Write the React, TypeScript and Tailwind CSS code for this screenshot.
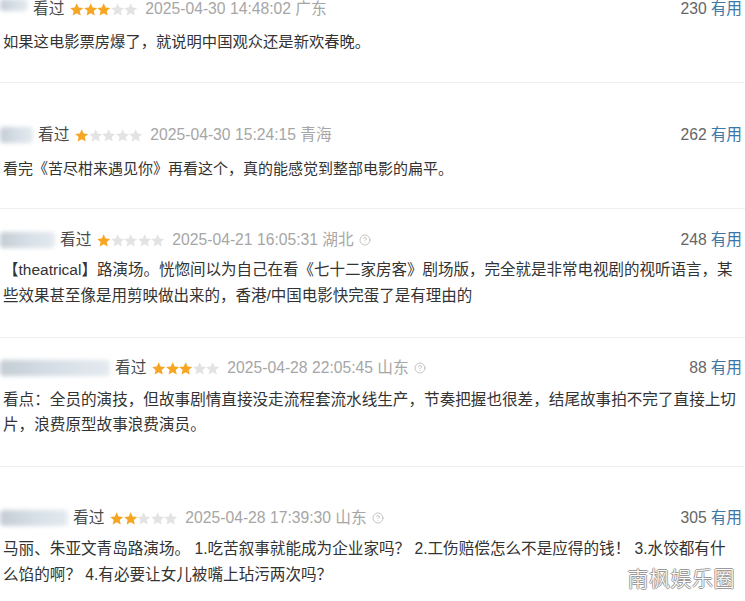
import { CircleHelp } from "lucide-react";

type Review = {
  blob: string;
  stars: number;
  time: string;
  place: string;
  help: boolean;
  votes: number;
  lines: string[];
  box: string;
  body: string;
};

const reviews: Review[] = [
  {
    blob: "w-[28px] h-[12px] -mt-[8px]",
    stars: 3,
    time: "2025-04-30 14:48:02",
    place: "广东",
    help: false,
    votes: 230,
    lines: ["如果这电影票房爆了，就说明中国观众还是新欢春晚。"],
    box: "pt-0 pb-[27px]",
    body: "mt-[11px] text-[15.3px] leading-[26px]",
  },
  {
    blob: "w-[33px] h-[16px]",
    stars: 1,
    time: "2025-04-30 15:24:15",
    place: "青海",
    help: false,
    votes: 262,
    lines: ["看完《苦尽柑来遇见你》再看这个，真的能感觉到整部电影的扁平。"],
    box: "pt-[43px] pb-[26px]",
    body: "mt-[12px] text-[15px] leading-[26px]",
  },
  {
    blob: "w-[55px] h-[16px]",
    stars: 1,
    time: "2025-04-21 16:05:31",
    place: "湖北",
    help: true,
    votes: 248,
    lines: [
      "【theatrical】路演场。恍惚间以为自己在看《七十二家房客》剧场版，完全就是非常电视剧的视听语言，某",
      "些效果甚至像是用剪映做出来的，香港/中国电影快完蛋了是有理由的",
    ],
    box: "pt-[22px] pb-[28px]",
    body: "mt-[8px] text-[15.5px] leading-[26px]",
  },
  {
    blob: "w-[110px] h-[16px]",
    stars: 3,
    time: "2025-04-28 22:05:45",
    place: "山东",
    help: true,
    votes: 88,
    lines: [
      "看点：全员的演技，但故事剧情直接没走流程套流水线生产，节奏把握也很差，结尾故事拍不完了直接上切",
      "片，浪费原型故事浪费演员。",
    ],
    box: "pt-[21px] pb-[29px]",
    body: "mt-[10px] text-[15.6px] leading-[25px]",
  },
  {
    blob: "w-[68px] h-[16px]",
    stars: 2,
    time: "2025-04-28 17:39:30",
    place: "山东",
    help: true,
    votes: 305,
    lines: [
      "马丽、朱亚文青岛路演场。 1.吃苦叙事就能成为企业家吗？ 2.工伤赔偿怎么不是应得的钱！ 3.水饺都有什",
      "么馅的啊？ 4.有必要让女儿被嘴上玷污两次吗？",
    ],
    box: "pt-[42px] pb-[12px]",
    body: "mt-[9px] text-[15.6px] leading-[26px]",
  },
];

function Star({ on }: { on: boolean }) {
  return (
    <svg viewBox="1.5 1.5 21 20" className="w-[13.4px] h-[13px]">
      <path
        d="M12 1.8l3 6.6 7.2.7-5.4 4.8 1.6 7.1L12 17.3 5.6 21l1.6-7.1L1.8 9.1 9 8.4z"
        fill={on ? "#f6a623" : "#e3e3e3"}
      />
    </svg>
  );
}

function ReviewItem({ r, last }: { r: Review; last: boolean }) {
  return (
    <div className={`${r.box} ${last ? "" : "border-b border-[#efefef]"}`}>
      <div className="flex items-center h-[18px] pr-[3px] text-[15.7px] leading-[18px]">
        <div className={`${r.blob} shrink-0 rounded-sm bg-gradient-to-r from-[#c4ccd4] via-[#d6dee6] to-[#e4eaef] blur-[2px]`} />
        <span className="ml-[5px] text-[#4a4a4a]">看过</span>
        <span className="ml-[6px] flex">
          {[0, 1, 2, 3, 4].map((i) => (
            <Star key={i} on={i < r.stars} />
          ))}
        </span>
        <span className="ml-[8px] text-[#a6a6a6]">
          {r.time} {r.place}
        </span>
        {r.help && (
          <CircleHelp size={12} strokeWidth={1.6} className="ml-[5px] text-[#b5b5b5]" />
        )}
        <span className="ml-auto text-[#666]">{r.votes}</span>
        <span className="ml-[4px] text-[#3b77a9]">有用</span>
      </div>
      <div className={`${r.body} pl-[3px] text-[#333] whitespace-nowrap overflow-hidden`}>
        {r.lines.map((l, i) => (
          <div key={i}>{l}</div>
        ))}
      </div>
    </div>
  );
}

export default function App() {
  return (
    <div className="relative h-[601px] w-[745px] overflow-hidden bg-white font-['Liberation_Sans','Noto_Sans_CJK_SC',sans-serif]">
      {reviews.map((r, i) => (
        <ReviewItem key={i} r={r} last={i === reviews.length - 1} />
      ))}
      <div className="absolute right-[10px] bottom-[12px] text-[21px] leading-none text-white font-light tracking-[0.5px] [text-shadow:1px_0_0_#9a9a9a,-1px_0_0_#9a9a9a,0_1px_0_#9a9a9a,0_-1px_0_#9a9a9a]">
        南枫娱乐圈
      </div>
    </div>
  );
}
